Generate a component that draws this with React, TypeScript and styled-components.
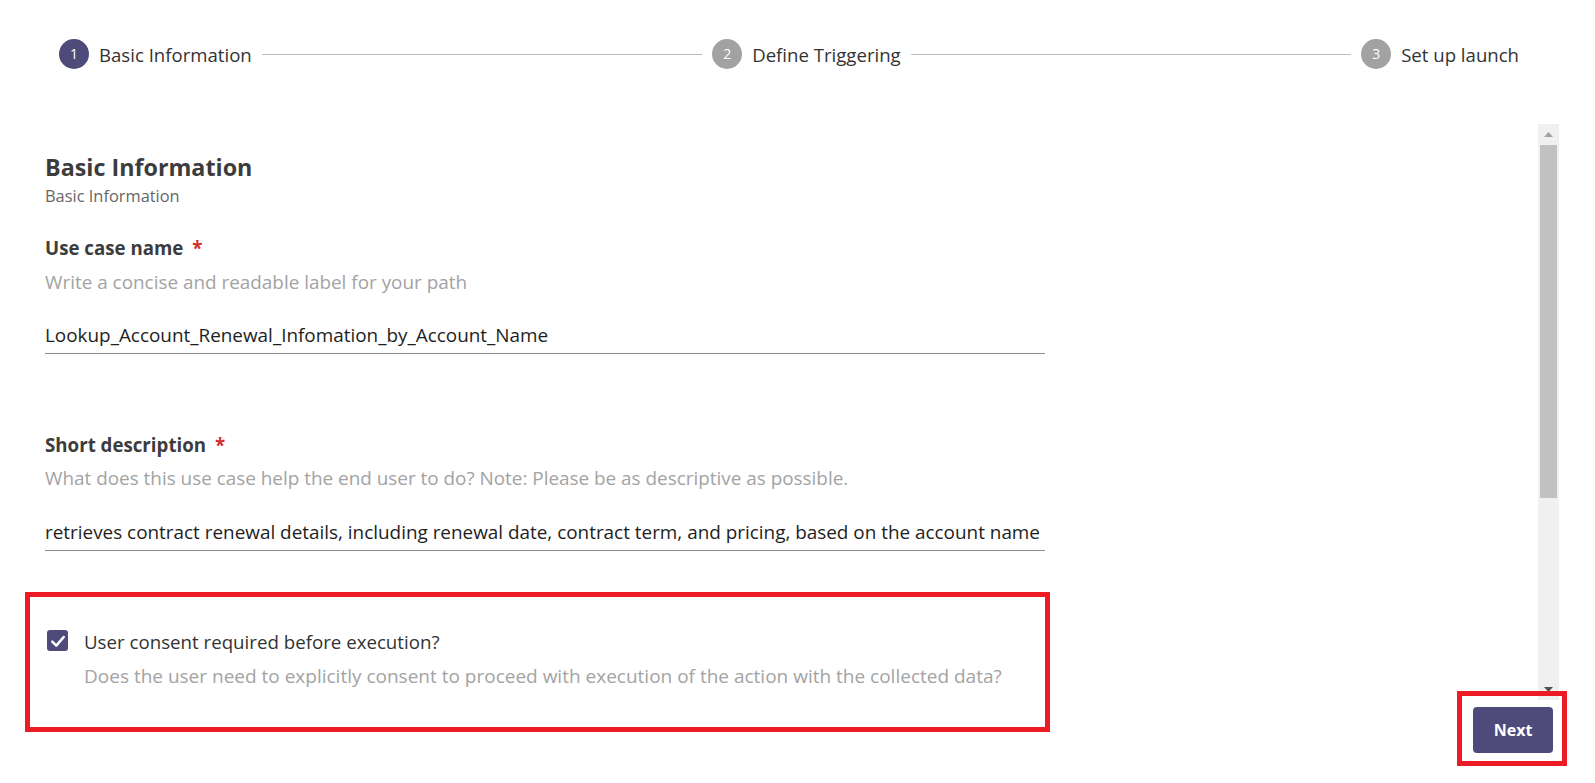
import React from "react";
import styled, { createGlobalStyle } from "styled-components";

const GlobalStyle = createGlobalStyle`
  html, body { margin: 0; padding: 0; background: #ffffff; }
  body { font-family: "Open Sans", "Noto Sans", sans-serif; color: #333333; }
  * { box-sizing: border-box; }
`;

const Page = styled.div`
  position: relative;
  width: 1595px;
  height: 783px;
  display: flex;
  flex-direction: column;
  overflow: hidden;
`;

const Stepper = styled.div`
  display: flex;
  align-items: center;
  padding: 39px 76px 0 59px;
  height: 69px;
`;

const Step = styled.div`
  display: flex;
  align-items: center;
  gap: 10px;
  flex: none;
`;

const StepCircle = styled.div<{ $active?: boolean }>`
  width: 30px;
  height: 30px;
  border-radius: 50%;
  background: ${(p) => (p.$active ? "#4e4b7b" : "#a2a2a2")};
  color: #ffffff;
  font-size: 14px;
  display: flex;
  align-items: center;
  justify-content: center;
  line-height: 1;
`;

const StepLabel = styled.span`
  font-size: 18.6px;
  color: #333333;
  white-space: nowrap;
`;

const Connector = styled.div`
  flex: 1;
  height: 1px;
  background: #bdbdbd;
  margin: 0 10px;
`;

const Body = styled.div`
  display: flex;
  margin-top: 55px;
  height: 576px;
  padding-right: 36px;
`;

const ScrollContent = styled.div`
  flex: 1;
  overflow: hidden;
  padding: 27px 0 0 45px;
`;

const Form = styled.div`
  width: 1000px;
  display: flex;
  flex-direction: column;
`;

const Heading = styled.h2`
  margin: 0;
  font-size: 23.3px;
  line-height: 32px;
  font-weight: 700;
  color: #3c3c3c;
`;

const SubHeading = styled.div`
  margin-top: 2px;
  font-size: 16.4px;
  line-height: 22px;
  color: #666666;
`;

const Label = styled.div<{ $gap: number }>`
  margin-top: ${(p) => p.$gap}px;
  font-size: 18.7px;
  line-height: 24px;
  font-weight: 700;
  color: #3c3c3c;
`;

const Required = styled.span`
  color: #d32f2f;
  margin-left: 9px;
  font-weight: 700;
`;

const Hint = styled.div<{ $gap: number }>`
  margin-top: ${(p) => p.$gap}px;
  font-size: 18.9px;
  line-height: 24px;
  color: #a3a3a3;
`;

const TextInput = styled.div<{ $gap: number }>`
  margin-top: ${(p) => p.$gap}px;
  font-size: 18.9px;
  line-height: 24px;
  color: #1e1e1e;
  padding-bottom: 6px;
  border-bottom: 1px solid #8c8c8c;
  white-space: nowrap;
  overflow: hidden;
`;

const ConsentRow = styled.div`
  margin-top: 79px;
  display: flex;
  align-items: flex-start;
  gap: 16px;
  padding-left: 2px;
`;

const CheckBox = styled.div`
  width: 21px;
  height: 21px;
  border-radius: 3px;
  background: #4e4b7b;
  display: flex;
  align-items: center;
  justify-content: center;
  flex: none;
`;

const ConsentText = styled.div`
  display: flex;
  flex-direction: column;
  gap: 10px;
`;

const ConsentTitle = styled.div`
  font-size: 18.7px;
  line-height: 24px;
  color: #333333;
`;

const ConsentHint = styled.div`
  font-size: 19px;
  line-height: 24px;
  color: #a3a3a3;
`;

const Scrollbar = styled.div`
  width: 21px;
  flex: none;
  background: #f0f0f0;
  display: flex;
  flex-direction: column;
  align-items: center;
`;

const ScrollArrow = styled.div`
  height: 21px;
  width: 100%;
  display: flex;
  align-items: center;
  justify-content: center;
  flex: none;
`;

const ScrollThumb = styled.div`
  width: 17px;
  height: 353px;
  background: #c1c1c1;
  flex: none;
`;

const Spacer = styled.div`
  flex: 1;
`;

const Footer = styled.div`
  display: flex;
  justify-content: flex-end;
  padding: 7px 42px 0 0;
`;

const NextButton = styled.button`
  width: 80px;
  height: 46px;
  border: none;
  border-radius: 4px;
  background: #4e4b7b;
  color: #ffffff;
  font-family: "Open Sans", "Noto Sans", sans-serif;
  font-size: 16px;
  font-weight: 700;
  cursor: pointer;
`;

const Highlight = styled.div<{ $x: number; $y: number; $w: number; $h: number }>`
  position: absolute;
  left: ${(p) => p.$x}px;
  top: ${(p) => p.$y}px;
  width: ${(p) => p.$w}px;
  height: ${(p) => p.$h}px;
  border: 5px solid #ed1c24;
  pointer-events: none;
`;

const steps = [
  { n: 1, label: "Basic Information", active: true },
  { n: 2, label: "Define Triggering", active: false },
  { n: 3, label: "Set up launch", active: false },
];

export default function App() {
  return (
    <>
      <GlobalStyle />
      <Page>
        <Stepper>
          {steps.map((s, i) => (
            <React.Fragment key={s.n}>
              {i > 0 && <Connector />}
              <Step>
                <StepCircle $active={s.active}>{s.n}</StepCircle>
                <StepLabel>{s.label}</StepLabel>
              </Step>
            </React.Fragment>
          ))}
        </Stepper>
        <Body>
          <ScrollContent>
            <Form>
              <Heading>Basic Information</Heading>
              <SubHeading>Basic Information</SubHeading>

              <Label $gap={29}>
                Use case name<Required>*</Required>
              </Label>
              <Hint $gap={10}>Write a concise and readable label for your path</Hint>
              <TextInput $gap={29}>Lookup_Account_Renewal_Infomation_by_Account_Name</TextInput>

              <Label $gap={79}>
                Short description<Required>*</Required>
              </Label>
              <Hint $gap={9}>
                What does this use case help the end user to do? Note: Please be as descriptive as possible.
              </Hint>
              <TextInput $gap={30}>
                retrieves contract renewal details, including renewal date, contract term, and pricing, based on the account name
              </TextInput>

              <ConsentRow>
                <CheckBox>
                  <svg width="16" height="16" viewBox="0 0 14 14">
                    <polyline
                      points="2,7.5 5.5,11 12,3.5"
                      fill="none"
                      stroke="#ffffff"
                      strokeWidth="2.2"
                      strokeLinecap="round"
                      strokeLinejoin="round"
                    />
                  </svg>
                </CheckBox>
                <ConsentText>
                  <ConsentTitle>User consent required before execution?</ConsentTitle>
                  <ConsentHint>
                    Does the user need to explicitly consent to proceed with execution of the action with the collected data?
                  </ConsentHint>
                </ConsentText>
              </ConsentRow>
            </Form>
          </ScrollContent>
          <Scrollbar>
            <ScrollArrow>
              <svg width="9" height="5" viewBox="0 0 9 5">
                <polygon points="0,5 4.5,0 9,5" fill="#a3a3a3" />
              </svg>
            </ScrollArrow>
            <ScrollThumb />
            <Spacer />
            <ScrollArrow>
              <svg width="9" height="5" viewBox="0 0 9 5">
                <polygon points="0,0 9,0 4.5,5" fill="#505050" />
              </svg>
            </ScrollArrow>
          </Scrollbar>
        </Body>
        <Footer>
          <NextButton>Next</NextButton>
        </Footer>
        <Highlight $x={25} $y={592} $w={1025} $h={140} />
        <Highlight $x={1457} $y={691} $w={110} $h={75} />
      </Page>
    </>
  );
}
